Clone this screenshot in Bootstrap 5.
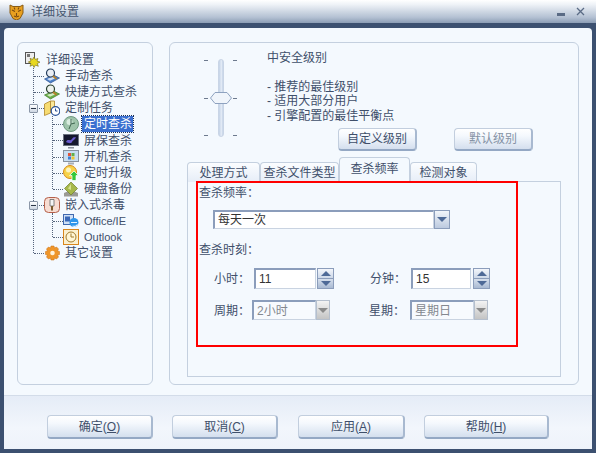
<!DOCTYPE html>
<html lang="zh-CN">
<head>
  <meta charset="UTF-8">
  <title>详细设置</title>
  <meta name="viewport" content="width=device-width, initial-scale=1">
  <link href="https://cdn.jsdelivr.net/npm/bootstrap@5.3.0/dist/css/bootstrap.min.css" rel="stylesheet">
  <script src="https://cdn.jsdelivr.net/npm/bootstrap@5.3.0/dist/js/bootstrap.bundle.min.js"></script>
  <style>
    html, body { width: 596px; height: 453px; overflow: hidden; background: #3c5070; }
    body, .btn, .form-control, .nav-link {
      font-family: "Liberation Sans", "Noto Sans CJK SC", sans-serif;
      font-size: 12px;
      line-height: 14px;
      color: #3f4f6a;
    }
    .app-window { width: 596px; height: 453px; }
    .title-bar {
      height: 23px;
      padding: 0 11px 0 9px;
      background: linear-gradient(#ffffff 0, #eef2f7 20%, #b4c1d3 75%, #8c9db5 100%);
      color: #46566f;
    }
    .title-text { margin-left: 7px; }
    .win-min { margin: 6px 11px 0 0; }
    .win-frame { height: 430px; background: #3c5070; padding: 5px 4px 4px; }
    .win-client { height: 421px; background: #f4f9fe; border-radius: 4px 4px 0 0; }
    .client-main { height: 367px; padding: 14px 13px 0; gap: 16px; }
    .group-box { height: 343px; background: #f4f9fe; border: 1px solid #c4d0df; border-radius: 6px; }
    .tree-box { width: 136px; padding-top: 9px; }
    .detail-box { width: 410px; padding: 8px 17px 0; }

    /* tree */
    .tree-list { list-style: none; margin: 0; padding: 0; position: relative; }
    .tree-row { height: 16.1px; position: relative; white-space: nowrap; }
    .tree-root { padding-left: 7px; gap: 5px; }
    .tree-l1 { padding-left: 26px; gap: 5px; }
    .tree-l2 { padding-left: 45px; gap: 5px; }
    .tree-icon { width: 16px; height: 16px; flex: none; position: relative; z-index: 1; }
    .tree-kids::before, .tree-sub::before {
      content: ""; position: absolute; top: 0; bottom: 8px; border-left: 1px dotted #55647c;
    }
    .tree-kids::before { left: 15px; }
    .tree-sub::before { left: 34px; }
    .tree-l1::before, .tree-l2::before {
      content: ""; position: absolute; top: 8px; width: 10px; border-top: 1px dotted #55647c;
    }
    .tree-l1::before { left: 16px; }
    .tree-l2::before { left: 35px; }
    .tree-exp {
      position: absolute; left: 11px; top: 4px; width: 9px; height: 9px; z-index: 1;
      background: linear-gradient(#fff, #cdd6e2); border: 1px solid #8b97a8; border-radius: 1px;
    }
    .tree-exp::after { content: ""; position: absolute; left: 1px; top: 3px; width: 5px; height: 1px; background: #2b3648; }
    .tree-selected { background: #3a6fd0; color: #fff; padding: 1px 1px 1px 2px; margin-left: -2px; outline: 1px dotted #1b2f55; }
    .tree-latin { font-size: 11px; }

    /* slider + text */
    .detail-top { height: 106px; }
    .slider-col { width: 80px; padding: 8px 0 0 17px; }
    .slider-ticks { height: 78px; width: 4px; padding: 1px 0; }
    .slider-ticks i { display: block; height: 1px; width: 4px; background: #6d7a8e; }
    .slider-track {
      width: 6px; height: 78px; margin: 0 9px 0 10px; position: relative;
      background: linear-gradient(90deg, #c3d2e6, #e3ebf6 60%, #c3d2e6); border: 1px solid #c9d5e6; border-radius: 3px;
    }
    .slider-thumb { position: absolute; left: -9px; top: 32px; width: 22px; height: 12px; }
    .info-line { height: 14.4px; white-space: nowrap; }
    .action-row { margin: 5px 0 0 71px; gap: 37px; }
    .skin-btn {
      height: 23px; padding: 0; border-radius: 4px; color: #3f4f6a;
      background: linear-gradient(#ffffff, #f4f8fd 35%, #d4dfee);
      border: 1px solid #c2cede; border-bottom: 2px solid #94a8c4; border-right: 2px solid #a8b9d0;
    }
    .skin-btn:disabled { color: #8592a5; opacity: 1; background: linear-gradient(#ffffff, #f4f8fd 35%, #d4dfee); border-color: #c2cede #a8b9d0 #94a8c4 #c2cede; }
    .level-btn { width: 79px; }

    /* tabs */
    .skin-tabs { height: 25px; border-bottom: 0; align-items: flex-end; position: relative; z-index: 1; }
    .skin-tabs .nav-link {
      height: 20px; padding: 3px 0 0; text-align: center; margin: 0; border-radius: 4px 4px 0 0;
      border: 1px solid #c4d0df; border-bottom: 0; background: linear-gradient(#fbfdff, #e6edf7); color: #3f4f6a;
    }
    .skin-tabs .nav-link.active { height: 25px; padding-top: 4px; background: #f4f9fe; color: #3f4f6a; }
    .tab-w1 { width: 73px; } .tab-w2 { width: 79px; } .tab-w3 { width: 71px; } .tab-w4 { width: 67px; }
    .tab-body {
      height: 196px; width: 374px; margin-top: -1px; border: 1px solid #c4d0df; position: relative;
      padding: 3px 0 0 11px;
    }
    .red-mark { position: absolute; left: 8px; top: -1px; width: 322px; height: 166px; border: 2px solid #ff0000; z-index: 2; pointer-events: none; }
    .colon-cn { font-family: "Noto Sans CJK TC", sans-serif; }

    /* form fields */
    .field { padding: 0 0 0 3px; border-radius: 0; color: #333; background: #fff; font-size: 12px; border: 1px solid #c9d3e1; border-top: 2px solid #8b9dbb; border-left: 2px solid #8b9dbb; box-shadow: none; }
    .field:disabled { background: #f7fafe; color: #84888f; opacity: 1; }
    .drop-btn {
      width: 17px; padding: 0; border-radius: 0; border: 1px solid #8b9dbb;
      background: linear-gradient(#f1f5fa, #bccadf); display: flex; align-items: center; justify-content: center;
    }
    .drop-btn i { width: 0; height: 0; border: 5px solid transparent; border-top: 5px solid #4e6a97; border-bottom: 0; }
    .drop-btn:disabled { opacity: 1; border-color: #b5bfcd; background: linear-gradient(#f3f3f3, #c4c4c4); }
    .drop-btn:disabled i { border-top-color: #8a8a8a; }
    .freq-select { margin: 10px 0 13px 14px; width: 237px; height: 19px; }
    .time-row { height: 21px; margin: 11px 0 11px 15px; }
    .week-row { height: 20px; margin: 0 0 0 15px; }
    .lbl-hour { width: 40px; } .lbl-period { width: 38px; } .lbl-right { width: 41px; margin-left: 36px; }
    .lbl-right2 { margin-left: 39px; }
    .num-input { width: 62px; height: 21px; }
    .num-input2 { width: 60px; height: 21px; }
    .spin { width: 17px; height: 21px; margin-left: 1px; border: 1px solid #8b9dbb; }
    .spin2 { margin-left: 2px; }
    .spin span { flex: 1; display: flex; align-items: center; justify-content: center; background: linear-gradient(#f3f6fb, #cdd8e8); }
    .spin span + span { border-top: 1px solid #8b9dbb; background: linear-gradient(#d6dfec, #a9bad3); }
    .spin .up { border: 5px solid transparent; border-bottom: 5px solid #4e6a97; border-top: 0; }
    .spin .dn { border: 5px solid transparent; border-top: 5px solid #4e6a97; border-bottom: 0; }
    .week-select { width: 78px; height: 20px; }

    /* footer */
    .client-foot {
      height: 54px; padding: 19px 0 0 43px; gap: 19px;
      border-top: 1px solid #d3dce9;
      background: linear-gradient(#e5ecf7, #f2f6fc 60%, #eef3fa);
    }
    .foot-btn { width: 106px; height: 24px; }
    .foot-apply { width: 107px; margin-left: 1px; }
    .foot-help { width: 125px; }
  </style>
</head>
<body>

<svg width="0" height="0" class="d-none">
  <symbol id="ic-root" viewBox="0 0 16 16">
    <rect x="0.500" y="0.500" width="9" height="11" fill="#eee" stroke="#555"/>
    <rect x="2" y="2" width="3" height="3" fill="#777"/>
    <path d="M9 5l1.300 2.400L13 6.500l-1 2.600 3 1-2.700 1.400 1 2.800-2.800-1.200L9 15.500 7.800 13 5 14.300l1-2.800L3.300 10l2.700-1-1-2.600 2.700 1z" fill="#e8d820" stroke="#6c6410" stroke-width=".6"/>
  </symbol>
  <symbol id="ic-scan" viewBox="0 0 16 16">
    <path d="M0.500 11l9-4 6 3-9 5z" fill="#4b7fc8" stroke="#2f5590" stroke-width=".7"/>
    <path d="M3 11l6-2.500 3 1.500-6 2.800z" fill="#cfe0f6"/>
    <circle cx="6.500" cy="5" r="4" fill="#e9eef5" stroke="#27405f" stroke-width="1.200"/>
    <path d="M9 8l3.500 3" stroke="#b5802a" stroke-width="1.800"/>
  </symbol>
  <symbol id="ic-short" viewBox="0 0 16 16">
    <path d="M0.500 11l9-4 6 3-9 5z" fill="#6bb04a" stroke="#3f7a2a" stroke-width=".7"/>
    <path d="M3 11l6-2.500 3 1.500-6 2.800z" fill="#d2eac2"/>
    <circle cx="6.500" cy="5" r="4" fill="#eef3ee" stroke="#2a4030" stroke-width="1.200"/>
    <path d="M9 8l3.500 3" stroke="#b5802a" stroke-width="1.800"/>
  </symbol>
  <symbol id="ic-task" viewBox="0 0 16 16">
    <path d="M0.500 4l6-3v12l-6 2.500z" fill="#f7dc72" stroke="#b0862a" stroke-width=".8"/>
    <path d="M6.500 1h4v9h-4z" fill="#fbe89a" stroke="#b0862a" stroke-width=".8"/>
    <circle cx="11.500" cy="11" r="4.300" fill="#fff" stroke="#274f96" stroke-width="1.200"/>
    <path d="M11.500 8.500V11h2" fill="none" stroke="#274f96"/>
  </symbol>
  <symbol id="ic-clock" viewBox="0 0 16 16">
    <circle cx="8" cy="8" r="7.500" fill="#9fc4ab" stroke="#6f9a80"/>
    <circle cx="6.500" cy="6" r="3" fill="#d9ecdf"/>
    <path d="M8 3v5l-2 5M8 8l4-1" fill="none" stroke="#3f6650"/>
  </symbol>
  <symbol id="ic-screen" viewBox="0 0 16 16">
    <rect x="0.500" y="1.500" width="15" height="11" fill="#14182e" stroke="#6b7280"/>
    <path d="M3 9c2-4 4 0 6-3s3-1 4-2c-1 3-3 3-4 5s-4 1-6 0z" fill="#6a5bd0"/>
    <path d="M5 14h6v1.500H5z" fill="#888f9a"/>
  </symbol>
  <symbol id="ic-boot" viewBox="0 0 16 16">
    <rect x="0.500" y="1.500" width="15" height="11" fill="#c7def2" stroke="#87919e"/>
    <rect x="5" y="4" width="3" height="3" fill="#e2553a"/><rect x="8.500" y="4" width="3" height="3" fill="#62b04a"/>
    <rect x="5" y="7.500" width="3" height="3" fill="#3d7fd6"/><rect x="8.500" y="7.500" width="3" height="3" fill="#edc62f"/>
    <path d="M5 13.500h6v2H5z" fill="#a7adb6"/>
  </symbol>
  <symbol id="ic-update" viewBox="0 0 16 16">
    <circle cx="7" cy="7" r="6.500" fill="#f6d24a" stroke="#d98a18"/>
    <circle cx="5.500" cy="5" r="2.500" fill="#fdf3bd"/>
    <path d="M11 6l4.500 4.500h-2.500V15.500h-4v-5H6.500z" fill="#35c83a" stroke="#fff" stroke-width=".7"/>
  </symbol>
  <symbol id="ic-disk" viewBox="0 0 16 16">
    <path d="M1 12l7-3 7 3v3.500H1z" fill="#9a9a94"/>
    <path d="M8 1l6.500 6.500L8 14 1.500 7.500z" fill="#a6b84a" stroke="#6f7d2c" stroke-width=".7"/>
    <path d="M8 3L5 7.500 8 9z" fill="#d6e08f"/>
  </symbol>
  <symbol id="ic-plug" viewBox="0 0 16 16">
    <rect x="0.500" y="0.500" width="15" height="15" rx="4" fill="#f7dcd2" stroke="#b5604a"/>
    <path d="M6 2.500h4v6.500H6z" fill="#f4f4f4" stroke="#666" stroke-width=".8"/>
    <path d="M7 9h2v4.500H7z" fill="#7b5b2c"/>
  </symbol>
  <symbol id="ic-office" viewBox="0 0 16 16">
    <rect x="0.500" y="1.500" width="10" height="10" fill="#cfe0f6" stroke="#4069b0"/>
    <rect x="2" y="3.500" width="5" height="5" fill="#3a68b8"/>
    <circle cx="11" cy="9.500" r="4.500" fill="#2e95ea"/>
    <path d="M8 9.500h6M9.500 13c3 1 4.500-.5 5-1.500" fill="none" stroke="#e5f3ff" stroke-width="1.200"/>
  </symbol>
  <symbol id="ic-outlook" viewBox="0 0 16 16">
    <rect x="0.500" y="0.500" width="15" height="15" fill="#fbf0cf" stroke="#d8861c"/>
    <circle cx="8" cy="8" r="5" fill="#fff6d6" stroke="#a37c2c"/>
    <path d="M8 4.500V8h3" fill="none" stroke="#a37c2c"/>
  </symbol>
  <symbol id="ic-gear" viewBox="0 0 16 16">
    <path d="M7 1h3l.5 2 2-1 2 2-1 2 2 .5v3l-2 .5 1 2-2 2-2-1-.5 2H7l-.5-2-2 1-2-2 1-2-2-.5v-3l2-.5-1-2 2-2 2 1z" fill="#ef962a" stroke="#c66c12" stroke-width=".5"/>
    <circle cx="8.500" cy="8" r="2.300" fill="#fff3dc"/>
  </symbol>
</svg>

<div class="app-window d-flex flex-column">
  <div class="title-bar d-flex align-items-center">
    <svg width="15" height="16" viewBox="0 0 15 16">
      <path d="M1 1l3 1.500h7L14 1v8l-3 5.500-3.500 1.500L4 14.500 1 9z" fill="#e8a020" stroke="#8a5c14"/>
      <path d="M3 6l3 1.500M12 6L9 7.500M7.500 9v3M5 12l2.500 1 2.500-1M5 3.500l1 2M10 3.500l-1 2" fill="none" stroke="#7a4a10" stroke-width="1.100"/>
    </svg>
    <span class="title-text flex-grow-1">详细设置</span>
    <svg class="win-min" width="8" height="3" viewBox="0 0 8 3"><rect width="8" height="3" fill="#5a6b85"/></svg>
    <svg width="9" height="9" viewBox="0 0 9 9"><path d="M1 1l7 7M8 1L1 8" stroke="#5a6b85" stroke-width="1.300"/></svg>
  </div>

  <div class="win-frame">
    <div class="win-client d-flex flex-column">
      <div class="client-main d-flex">

        <div class="group-box tree-box">
          <div class="tree-row tree-root d-flex align-items-center"><svg class="tree-icon"><use href="#ic-root"/></svg>详细设置</div>
          <ul class="tree-list tree-kids">
            <li class="tree-row tree-l1 d-flex align-items-center"><svg class="tree-icon"><use href="#ic-scan"/></svg>手动查杀</li>
            <li class="tree-row tree-l1 d-flex align-items-center"><svg class="tree-icon"><use href="#ic-short"/></svg>快捷方式查杀</li>
            <li>
              <div class="tree-row tree-l1 d-flex align-items-center"><span class="tree-exp"></span><svg class="tree-icon"><use href="#ic-task"/></svg>定制任务</div>
              <ul class="tree-list tree-sub">
                <li class="tree-row tree-l2 d-flex align-items-center"><svg class="tree-icon"><use href="#ic-clock"/></svg><span class="tree-selected">定时查杀</span></li>
                <li class="tree-row tree-l2 d-flex align-items-center"><svg class="tree-icon"><use href="#ic-screen"/></svg>屏保查杀</li>
                <li class="tree-row tree-l2 d-flex align-items-center"><svg class="tree-icon"><use href="#ic-boot"/></svg>开机查杀</li>
                <li class="tree-row tree-l2 d-flex align-items-center"><svg class="tree-icon"><use href="#ic-update"/></svg>定时升级</li>
                <li class="tree-row tree-l2 d-flex align-items-center"><svg class="tree-icon"><use href="#ic-disk"/></svg>硬盘备份</li>
              </ul>
            </li>
            <li>
              <div class="tree-row tree-l1 d-flex align-items-center"><span class="tree-exp"></span><svg class="tree-icon"><use href="#ic-plug"/></svg>嵌入式杀毒</div>
              <ul class="tree-list tree-sub">
                <li class="tree-row tree-l2 d-flex align-items-center"><svg class="tree-icon"><use href="#ic-office"/></svg><span class="tree-latin">Office/IE</span></li>
                <li class="tree-row tree-l2 d-flex align-items-center"><svg class="tree-icon"><use href="#ic-outlook"/></svg><span class="tree-latin">Outlook</span></li>
              </ul>
            </li>
            <li class="tree-row tree-l1 d-flex align-items-center"><svg class="tree-icon"><use href="#ic-gear"/></svg>其它设置</li>
          </ul>
        </div>

        <div class="group-box detail-box">
          <div class="detail-top d-flex">
            <div class="slider-col d-flex">
              <div class="slider-ticks d-flex flex-column justify-content-between"><i></i><i></i><i></i></div>
              <div class="slider-track">
                <svg class="slider-thumb" viewBox="0 0 22 12">
                  <path d="M5 .5h12l4.500 5.500-4.500 5.500H5L.5 6z" fill="#f0f5fb" stroke="#8ea2bf"/>
                </svg>
              </div>
              <div class="slider-ticks d-flex flex-column justify-content-between"><i></i><i></i><i></i></div>
            </div>
            <div>
              <div class="info-line">中安全级别</div>
              <div class="info-line"></div>
              <div class="info-line">- 推荐的最佳级别</div>
              <div class="info-line">- 适用大部分用户</div>
              <div class="info-line">- 引擎配置的最佳平衡点</div>
              <div class="action-row d-flex">
                <button type="button" class="btn skin-btn level-btn">自定义级别</button>
                <button type="button" class="btn skin-btn level-btn" disabled>默认级别</button>
              </div>
            </div>
          </div>

          <ul class="nav skin-tabs" role="tablist">
            <li class="nav-item"><a class="nav-link tab-w1" href="#">处理方式</a></li>
            <li class="nav-item"><a class="nav-link tab-w2" href="#">查杀文件类型</a></li>
            <li class="nav-item"><a class="nav-link active tab-w3" href="#">查杀频率</a></li>
            <li class="nav-item"><a class="nav-link tab-w4" href="#">检测对象</a></li>
          </ul>
          <div class="tab-body">
            <div class="red-mark"></div>
            <div>查杀频率<span class="colon-cn">：</span></div>
            <div class="freq-select d-flex">
              <input type="text" class="form-control field" value="每天一次">
              <button type="button" class="btn drop-btn"><i></i></button>
            </div>
            <div>查杀时刻<span class="colon-cn">：</span></div>
            <div class="time-row d-flex align-items-center">
              <span class="lbl-hour">小时<span class="colon-cn">：</span></span>
              <input type="text" class="form-control field num-input" value="11">
              <div class="spin d-flex flex-column"><span><i class="up"></i></span><span><i class="dn"></i></span></div>
              <span class="lbl-right">分钟<span class="colon-cn">：</span></span>
              <input type="text" class="form-control field num-input2" value="15">
              <div class="spin spin2 d-flex flex-column"><span><i class="up"></i></span><span><i class="dn"></i></span></div>
            </div>
            <div class="week-row d-flex align-items-center">
              <span class="lbl-period">周期<span class="colon-cn">：</span></span>
              <div class="week-select d-flex">
                <input type="text" class="form-control field" value="2小时" disabled>
                <button type="button" class="btn drop-btn" disabled><i></i></button>
              </div>
              <span class="lbl-right lbl-right2">星期<span class="colon-cn">：</span></span>
              <div class="week-select d-flex">
                <input type="text" class="form-control field" value="星期日" disabled>
                <button type="button" class="btn drop-btn" disabled><i></i></button>
              </div>
            </div>
          </div>
        </div>
      </div>

      <div class="client-foot d-flex">
        <button type="button" class="btn skin-btn foot-btn">确定(<u>O</u>)</button>
        <button type="button" class="btn skin-btn foot-btn">取消(<u>C</u>)</button>
        <button type="button" class="btn skin-btn foot-btn foot-apply">应用(<u>A</u>)</button>
        <button type="button" class="btn skin-btn foot-btn foot-help">帮助(<u>H</u>)</button>
      </div>
    </div>
  </div>
</div>

</body>
</html>
